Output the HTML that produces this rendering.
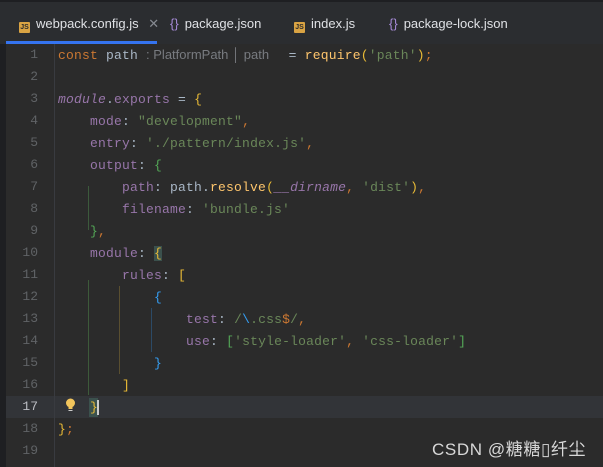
<!DOCTYPE html>
<html><head><meta charset="utf-8"><style>
body{margin:0;width:603px;height:467px;overflow:hidden;background:#2b2b2b;font-family:"Liberation Sans",sans-serif}
.tabs{position:absolute;left:0;top:0;width:603px;height:44px;background:#2b2d30;border-top:2px solid #1e1f22;box-sizing:border-box}
.tab{position:absolute;top:14px;font-size:13px;color:#dfe1e5;white-space:nowrap}
.js{display:inline-block;width:11px;height:11px;background:#d9a343;color:#2b2b2b;font-size:7px;font-weight:bold;text-align:center;line-height:12px;vertical-align:-1px;margin-right:6px;border-radius:1px}
.br{color:#a78bd8;margin-right:6px}
.ul{position:absolute;left:6px;top:41px;width:151px;height:3px;background:#3574f0}
.left{position:absolute;left:0;top:44px;width:6px;height:423px;background:#1e1f22}
.nums{position:absolute;left:6px;top:44px;width:32px;text-align:right;font:13px/22px "Liberation Mono",monospace;color:#606366}
.sep{position:absolute;left:54px;top:44px;width:1px;height:423px;background:#393b40}
.hl{position:absolute;left:6px;top:396px;width:597px;height:22px;background:#323438}
.code{position:absolute;left:58px;top:44px;font:13px/22px "Liberation Mono",monospace;color:#a9b7c6;white-space:pre;letter-spacing:0.2px}
.k{color:#cc7832}.s{color:#6a8759}.p{color:#9876aa}.f{color:#ffc66d}.y{color:#e8ba36}.g{color:#54a857}.b{color:#359ff4}.o{color:#cc7832}
.hint{font-family:"Liberation Sans",sans-serif;font-size:13px;color:#787b80;letter-spacing:0}
.guide{position:absolute;width:1px}
.wm{position:absolute;left:432px;top:435px;font-size:17px;color:#d8d8d8;letter-spacing:0.6px;font-family:"Liberation Sans","Noto Sans CJK SC",sans-serif}
</style></head><body>
<div class="tabs">
<div class="tab" style="left:19px"><span class="js">JS</span>webpack.config.js <span style="color:#868a91;margin-left:6px">✕</span></div>
<div class="tab" style="left:170px"><span class="br">{}</span>package.json</div>
<div class="tab" style="left:294px"><span class="js">JS</span>index.js</div>
<div class="tab" style="left:389px"><span class="br">{}</span>package-lock.json</div>
</div>
<div class="ul"></div>
<div class="left"></div>
<div class="hl"></div>
<div class="sep"></div>
<div class="nums">1<br>2<br>3<br>4<br>5<br>6<br>7<br>8<br>9<br>10<br>11<br>12<br>13<br>14<br>15<br>16<br><span style="color:#bcbec4">17</span><br>18<br>19</div>
<div class="guide" style="left:88px;top:186px;height:44px;background:#3c5a3c"></div>
<div class="guide" style="left:88px;top:280px;height:115px;background:#3d5a3a"></div>
<div class="guide" style="left:119px;top:286px;height:88px;background:#5a4f30"></div>
<div class="guide" style="left:151px;top:308px;height:44px;background:#2c4a66"></div>
<div style="position:absolute;left:65px;top:398px;width:11px;height:14px"><svg width="11" height="15"><circle cx="5.5" cy="5" r="4.5" fill="#f2c55c"/><rect x="3.5" y="9" width="4" height="2" fill="#f2c55c"/><rect x="3.5" y="12" width="4" height="1" fill="#ccc"/></svg></div>
<div style="position:absolute;left:89px;top:398px;width:9px;height:19px;background:#3b514d"></div>
<div class="code"><span class="k">const</span> path <span class="hint">: PlatformPath │ path </span>  = <span class="f">require</span><span class="y">(</span><span class="s">'path'</span><span class="y">)</span><span class="o">;</span>

<i class="p">module</i>.<span class="p">exports</span> = <span class="y">{</span>
    <span class="p">mode</span>: <span class="s">"development"</span><span class="o">,</span>
    <span class="p">entry</span>: <span class="s">'./pattern/index.js'</span><span class="o">,</span>
    <span class="p">output</span>: <span class="g">{</span>
        <span class="p">path</span>: path.<span class="f">resolve</span><span class="y">(</span><i class="p">__dirname</i><span class="o">,</span> <span class="s">'dist'</span><span class="y">)</span><span class="o">,</span>
        <span class="p">filename</span>: <span class="s">'bundle.js'</span>
    <span class="g">}</span><span class="o">,</span>
    <span class="p">module</span>: <span class="y" style="background:#3b514d">{</span>
        <span class="p">rules</span>: <span class="y">[</span>
            <span class="b">{</span>
                <span class="p">test</span>: <span class="s">/</span><span class="b">\</span><span class="s">.css</span><span class="o">$</span><span class="s">/</span><span class="o">,</span>
                <span class="p">use</span>: <span class="g">[</span><span class="s">'style-loader'</span><span class="o">,</span> <span class="s">'css-loader'</span><span class="g">]</span>
            <span class="b">}</span>
        <span class="y">]</span>
    <span class="y">}</span><span style="border-left:2px solid #ccc;margin-left:-1px"></span>
<span class="y">}</span><span class="o">;</span>
</div>
<div class="wm">CSDN @糖糖▯纤尘</div>
</body></html>
